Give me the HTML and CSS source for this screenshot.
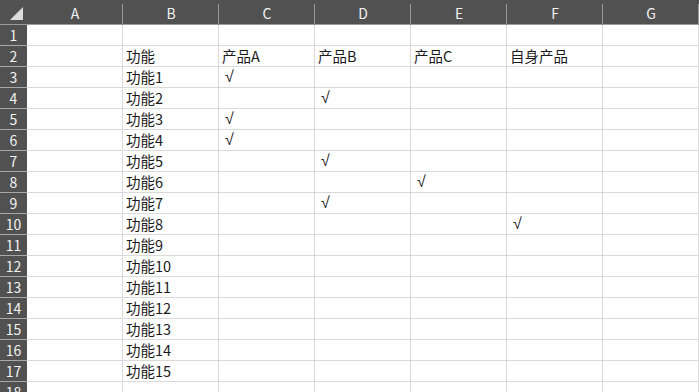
FILE: index.html
```html
<!DOCTYPE html>
<html lang="zh-CN">
<head>
  <meta charset="UTF-8">
  <title>功能对比</title>
  <link rel="stylesheet" href="styles.css">
</head>
<body>

  <div class="sheet">
    <!-- 列标题 -->
    <div class="corner"><svg width="14" height="14" viewBox="0 0 14 14"><polygon points="13,0 13,13 0,13" fill="#dcdcdc"/></svg></div>
    <div class="col">A</div><div class="col">B</div><div class="col">C</div><div class="col">D</div><div class="col">E</div><div class="col">F</div><div class="col">G</div>

    <div class="row">1</div><div class="cell"></div><div class="cell"></div><div class="cell"></div><div class="cell"></div><div class="cell"></div><div class="cell"></div><div class="cell"></div>
    <div class="row">2</div><div class="cell"></div><div class="cell">功能</div><div class="cell">产品A</div><div class="cell">产品B</div><div class="cell">产品C</div><div class="cell">自身产品</div><div class="cell"></div>
    <div class="row">3</div><div class="cell"></div><div class="cell">功能1</div><div class="cell check">√</div><div class="cell"></div><div class="cell"></div><div class="cell"></div><div class="cell"></div>
    <div class="row">4</div><div class="cell"></div><div class="cell">功能2</div><div class="cell"></div><div class="cell check">√</div><div class="cell"></div><div class="cell"></div><div class="cell"></div>
    <div class="row">5</div><div class="cell"></div><div class="cell">功能3</div><div class="cell check">√</div><div class="cell"></div><div class="cell"></div><div class="cell"></div><div class="cell"></div>
    <div class="row">6</div><div class="cell"></div><div class="cell">功能4</div><div class="cell check">√</div><div class="cell"></div><div class="cell"></div><div class="cell"></div><div class="cell"></div>
    <div class="row">7</div><div class="cell"></div><div class="cell">功能5</div><div class="cell"></div><div class="cell check">√</div><div class="cell"></div><div class="cell"></div><div class="cell"></div>
    <div class="row">8</div><div class="cell"></div><div class="cell">功能6</div><div class="cell"></div><div class="cell"></div><div class="cell check">√</div><div class="cell"></div><div class="cell"></div>
    <div class="row">9</div><div class="cell"></div><div class="cell">功能7</div><div class="cell"></div><div class="cell check">√</div><div class="cell"></div><div class="cell"></div><div class="cell"></div>
    <div class="row">10</div><div class="cell"></div><div class="cell">功能8</div><div class="cell"></div><div class="cell"></div><div class="cell"></div><div class="cell check">√</div><div class="cell"></div>
    <div class="row">11</div><div class="cell"></div><div class="cell">功能9</div><div class="cell"></div><div class="cell"></div><div class="cell"></div><div class="cell"></div><div class="cell"></div>
    <div class="row">12</div><div class="cell"></div><div class="cell">功能10</div><div class="cell"></div><div class="cell"></div><div class="cell"></div><div class="cell"></div><div class="cell"></div>
    <div class="row">13</div><div class="cell"></div><div class="cell">功能11</div><div class="cell"></div><div class="cell"></div><div class="cell"></div><div class="cell"></div><div class="cell"></div>
    <div class="row">14</div><div class="cell"></div><div class="cell">功能12</div><div class="cell"></div><div class="cell"></div><div class="cell"></div><div class="cell"></div><div class="cell"></div>
    <div class="row">15</div><div class="cell"></div><div class="cell">功能13</div><div class="cell"></div><div class="cell"></div><div class="cell"></div><div class="cell"></div><div class="cell"></div>
    <div class="row">16</div><div class="cell"></div><div class="cell">功能14</div><div class="cell"></div><div class="cell"></div><div class="cell"></div><div class="cell"></div><div class="cell"></div>
    <div class="row">17</div><div class="cell"></div><div class="cell">功能15</div><div class="cell"></div><div class="cell"></div><div class="cell"></div><div class="cell"></div><div class="cell"></div>
    <div class="row">18</div><div class="cell"></div><div class="cell"></div><div class="cell"></div><div class="cell"></div><div class="cell"></div><div class="cell"></div><div class="cell"></div>
  </div>

</body>
</html>
```

FILE: styles.css
```css
body {
  margin: 0;
  background-color: #fff;
  overflow: hidden;
  font-family: "Noto Sans CJK SC", "Noto Sans", sans-serif;
}

.sheet {
  display: grid;
  grid-template-columns: 27px repeat(7, 96px);
  grid-template-rows: 25px;
  grid-auto-rows: 21px;
}

.sheet > div {
  box-sizing: border-box;
}

.corner {
  background-color: #515151;
  border-bottom: 1px solid #9a9a9a;
  display: flex;
  justify-content: flex-end;
  align-items: flex-end;
  padding: 0 3px 3px 0;
}

.col {
  background: linear-gradient(#9a9a9a, #9a9a9a) right 4px / 1px calc(100% - 4px) no-repeat, #515151;
  border-bottom: 1px solid #9a9a9a;
  color: #f2f2f2;
  font-size: 14px;
  display: flex;
  justify-content: center;
  align-items: center;
  padding-top: 1px;
}

.row {
  background-color: #515151;
  border-bottom: 1px solid #a8a8a8;
  color: #f2f2f2;
  font-size: 14px;
  display: flex;
  justify-content: center;
  align-items: center;
}

.cell {
  border-right: 1px solid #dadada;
  border-bottom: 1px solid #dadada;
  font-size: 14.5px;
  color: #1a1a1a;
  padding: 0 3px;
  line-height: 20px;
  white-space: nowrap;
}

.check {
  font-family: "Liberation Sans", sans-serif;
  font-size: 16px;
  padding-left: 6px;
}
```
